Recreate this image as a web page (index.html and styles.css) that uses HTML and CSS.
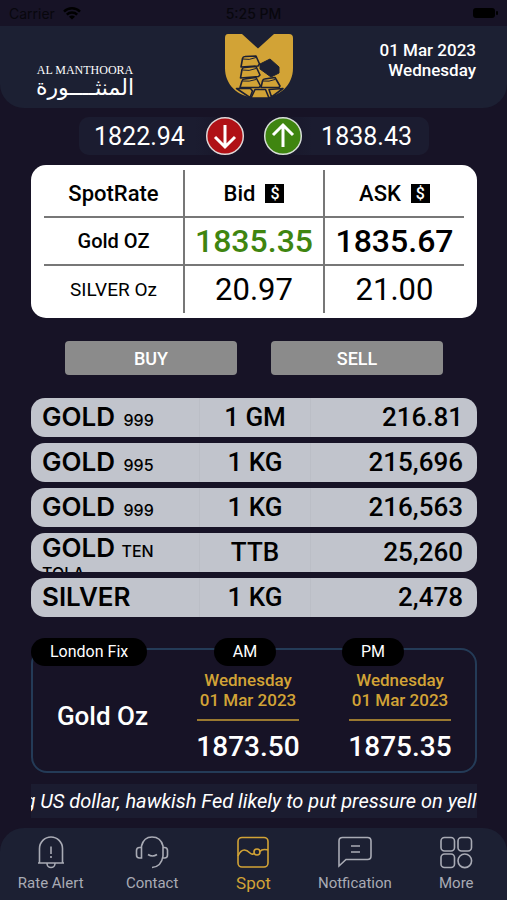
FILE: index.html
```
<!DOCTYPE html>
<html lang="en">
<head>
<meta charset="utf-8">
<meta name="viewport" content="width=device-width, initial-scale=1">
<title>Al Manthoora</title>
<link rel="stylesheet" href="styles.css">
</head>
<body>
<div class="status">
  <div class="carrier">Carrier
    <svg width="18" height="13" viewBox="0 0 18 13" fill="none" stroke="#000" stroke-width="2.4"><path d="M1 4.6a11.4 11.4 0 0 1 16 0M3.8 7.7a7.4 7.4 0 0 1 10.4 0"/><path d="M9 12.6L6 9.7a4.2 4.2 0 0 1 6 0z" fill="#000" stroke="none"/></svg>
  </div>
  <div class="clock">5:25 PM</div>
  <svg class="battery" width="26" height="12" viewBox="0 0 26 12"><rect x="1" y="1" width="22" height="10" rx="3"/><rect x="24" y="4" width="2" height="4" rx="1"/></svg>
</div>
<header class="header">
  <div class="brand">
    <div class="brand-en">AL MANTHOORA</div>
    <div class="brand-ar" lang="ar" dir="rtl">المنثــــورة</div>
  </div>
  <svg class="logo" width="70" height="66" viewBox="0 0 70 66">
    <path d="M4 1H18L34 15.500L50 1H65Q69 1 69 5V35C69 52 56 65 35 65S1 52 1 35V5Q1 1 4 1z" fill="#d2a336"/>
    <g fill="#d2a336" stroke="#1c2033" stroke-width="1.600" stroke-linejoin="round">
      <path d="M21 23.500L32 23L35.500 31L34 33L17 34L18.500 25.500Q19 23.500 21 23.500z"/>
      <path d="M20.500 34.500L32 33.500L36 42L34.500 43.500L16.500 45L18 36.500Q18.500 34.500 20.500 34.500z"/>
      <path d="M20.500 46L32 44.500L36.500 53L35 54.500H16L18 48Q18.500 46 20.500 46z"/>
      <path d="M40.500 46L51 44.500L56 53L55 54.500H37L38.500 48Q39 46 40.500 46z"/>
      <path d="M31 56.500H41.500L45 65H27z"/>
      <path d="M12.500 55.500H26.500L28.500 58L26 64.500z"/>
      <path d="M45 56.500L59 55.500L47.500 64z"/>
    </g>
    <path d="M36 31L46 26L55 34V40L47 44L36 36z" fill="#1c2033" stroke="#1c2033" stroke-linejoin="round"/>
    <path d="M19 26Q25 27.500 32 24.500M18.500 37Q25 38.500 32 35.500M18.500 48Q25 49 32 46.500M39 48Q45 49 51 46.500" stroke="#1c2033" stroke-width="1" fill="none"/>
  </svg>
  <div class="today">01 Mar 2023<br>Wednesday</div>
</header>
<main class="main">
  <section class="range">
    <div class="range-pill low"><span>1822.94</span>
      <svg width="40" height="40" viewBox="0 0 40 40"><circle cx="20" cy="20" r="18.300" fill="#b01116" stroke="#ddd6d6" stroke-width="1.500"/><path d="M20 9V31M10 21L20 31L30 21" fill="none" stroke="#fff" stroke-width="3"/></svg>
    </div>
    <div class="range-pill high">
      <svg width="40" height="40" viewBox="0 0 40 40"><circle cx="20" cy="20" r="18.300" fill="#3f8510" stroke="#d6ddd6" stroke-width="1.500"/><path d="M20 31V9M10 19L20 9L30 19" fill="none" stroke="#fff" stroke-width="3"/></svg>
      <span>1838.43</span></div>
  </section>
  <section class="spot">
    <table>
      <thead><tr><th>SpotRate</th>
        <th><span class="head">Bid <span class="dollar">$</span></span></th>
        <th><span class="head">ASK <span class="dollar">$</span></span></th></tr></thead>
      <tbody>
        <tr class="gold"><th>Gold OZ</th><td class="up">1835.35</td><td>1835.67</td></tr>
        <tr class="silver"><th>SILVER Oz</th><td>20.97</td><td>21.00</td></tr>
      </tbody>
    </table>
  </section>
  <section class="actions"><button type="button">BUY</button><button type="button">SELL</button></section>
  <table class="products">
    <tbody>
    <tr><td><div class="item">GOLD <small>999</small></div></td><td>1 GM</td><td>216.81</td></tr>
    <tr><td><div class="item">GOLD <small>995</small></div></td><td>1 KG</td><td>215,696</td></tr>
    <tr><td><div class="item">GOLD <small>999</small></div></td><td>1 KG</td><td>216,563</td></tr>
    <tr><td><div class="item wrapped">GOLD <small>TEN TOLA</small></div></td><td>TTB</td><td>25,260</td></tr>
    <tr><td><div class="item">SILVER</div></td><td>1 KG</td><td>2,478</td></tr>
    </tbody>
  </table>
  <section class="fix">
    <div class="fix-name"><h2 class="tag">London Fix</h2><strong>Gold Oz</strong></div>
    <div class="fix-col am"><h3 class="tag">AM</h3><p>Wednesday<br>01 Mar 2023</p><b>1873.50</b></div>
    <div class="fix-col pm"><h3 class="tag">PM</h3><p>Wednesday<br>01 Mar 2023</p><b>1875.35</b></div>
  </section>
  <div class="ticker"><span>g US dollar, hawkish Fed likely to put pressure on yello</span></div>
</main>
<nav class="nav">
  <a href="#alert"><svg width="36" height="36" viewBox="0 0 36 36"><path d="M6.500 29V14.500a11.500 11.500 0 0 1 23 0V29zM14 29.500a4 4 0 0 0 8 0M18 12.500V20M18 22V24M5 29H31"/></svg>Rate Alert</a>
  <a href="#contact"><svg width="36" height="36" viewBox="0 0 36 36"><path d="M7.500 13V12C9 6 13 3 18 3s9.500 3 11 9v10c-1 7-5 11-11 11.500M7 13.500H5.500a3 3 0 0 0-3 3V21a3 3 0 0 0 3 3H7.500V13.500zM29 13.500h1.500a3 3 0 0 1 3 3V21a3 3 0 0 1-3 3H29M14 20.500q4.500 3 9 0"/></svg>Contact</a>
  <a class="active" href="#spot"><svg width="36" height="36" viewBox="0 0 36 36"><rect x="3" y="3.500" width="30" height="29.500" rx="4"/><path d="M3 22C7 13 12 16 15 19c2 2 4 1 4.500 0M25 17.500c2-3 5-2 8-1.500"/><circle cx="22" cy="18" r="3"/></svg>Spot</a>
  <a href="#notification"><svg width="36" height="36" viewBox="0 0 36 36"><path d="M2 32V7q0-3.500 3.500-3.500H30.500Q34 3.500 34 7V22q0 3.500-3.500 3.500H9zM14 12H23M14 18H23"/></svg>Notfication</a>
  <a href="#more"><svg width="36" height="36" viewBox="0 0 36 36"><rect x="3" y="3.500" width="13.500" height="13.500" rx="3.500"/><rect x="20" y="3.500" width="13.500" height="13.500" rx="3.500"/><rect x="3" y="20" width="13.500" height="13.500" rx="3.500"/><circle cx="26.800" cy="26.800" r="6.800"/></svg>More</a>
</nav>
</body>
</html>
```
FILE: styles.css
```
* { box-sizing: border-box; }
body {
  margin: 0;
  min-height: 100vh;
  display: flex;
  flex-direction: column;
  background: #171326;
  color: #fff;
  font-family: Roboto, "Liberation Sans", sans-serif;
}
table { border-collapse: collapse; width: 100%; table-layout: fixed; }
th, td { padding: 0; }
h2, h3, p { margin: 0; }

.status {
  height: 26px;
  padding: 0 9px;
  display: grid;
  grid-template-columns: 1fr auto 1fr;
  align-items: center;
  color: #08070d;
  font: 500 14px Inter, sans-serif;
}
.carrier { display: flex; align-items: center; gap: 8px; font-weight: 400; }
.battery { justify-self: end; }

.header {
  height: 82px;
  padding: 0 31px 0 36px;
  display: grid;
  grid-template-columns: 1fr auto 182px;
  background: #1c2033;
  border-radius: 0 0 24px 24px;
}
.brand { width: 98px; padding-top: 37px; text-align: center; white-space: nowrap; }
.brand-en { font: 12px/14px "Liberation Serif", serif; }
.brand-ar { font: 22px/22px "DejaVu Sans", sans-serif; }
.logo { margin-top: 7px; }
.today { padding-top: 14px; text-align: right; font-size: 17px; line-height: 20px; font-weight: 500; }

.main { flex: 1; padding: 9px 30px 9px 31px; }
.range { display: flex; justify-content: center; gap: 18px; }
.range-pill {
  width: 166px;
  height: 38px;
  display: flex;
  align-items: center;
  justify-content: space-between;
  border-radius: 10px;
  background: linear-gradient(to right, #1b1c30 70%, #171326);
  font-size: 25px;
}
.low { padding-left: 15px; }
.high { padding-right: 17px; background: linear-gradient(to left, #1b1c30 70%, #171326); }

.spot {
  margin-top: 10px;
  padding: 5px 13px;
  border-radius: 15px;
  background: #fff;
  color: #000;
}
.spot tr { height: 48px; }
.spot thead tr { height: 47px; }
.spot th, .spot td { text-align: center; }
.spot tr > * + * { border-left: 2px solid #777; }
.spot tbody tr > * { border-top: 2px solid #777; }
.spot th { font-size: 22px; font-weight: 500; }
.head { display: flex; align-items: center; justify-content: center; gap: 10px; }
.dollar {
  width: 19px;
  height: 19px;
  background: #000;
  color: #fff;
  font-size: 16px;
  line-height: 19px;
}
.spot .gold th { font-size: 20px; }
.spot .silver th { font-size: 19px; font-weight: 400; }
.spot td { font-size: 31px; line-height: 36px; }
.spot .gold td { font-size: 32px; font-weight: 500; }
.spot .up { color: #3f8510; }

.actions { margin: 23px 34px 0; display: flex; gap: 34px; }
.actions button {
  flex: 1;
  height: 34px;
  border: 0;
  border-radius: 4px;
  background: #8b8b8b;
  color: #fff;
  font: 500 18px Roboto, sans-serif;
}

.products {
  margin-top: 17px;
  border-collapse: separate;
  border-spacing: 0 6px;
  color: #000;
  font-size: 26px;
  font-weight: 500;
}
.products td { height: 39px; background: #c1c4cc; text-align: center; line-height: 39px; }
.products td + td { border-left: 1px solid #bbbec6; }
.products td:first-child { width: 168px; border-radius: 14px 0 0 14px; text-align: left; }
.products td:nth-child(2) { width: 111px; }
.products td:last-child { border-radius: 0 14px 14px 0; padding-right: 14px; text-align: right; }
.item {
  height: 39px;
  padding-left: 11px;
  overflow: hidden;
  font: 600 26px/38px Inter, sans-serif;
}
.item small { margin-left: 2px; font-size: 16px; font-weight: 500; line-height: 16px; }
.wrapped { padding: 4px 40px 0 11px; line-height: 22px; }
.wrapped small { margin-left: 0; }

.fix {
  margin-top: 25px;
  height: 125px;
  display: grid;
  grid-template-columns: 139px 152px 152px;
  border: 2px solid #243b57;
  border-radius: 16px;
}
.tag {
  margin-top: -12px;
  padding: 0 19px;
  border-radius: 14px;
  background: #000;
  font-size: 16px;
  font-weight: 400;
  line-height: 28px;
}
.fix-name, .fix-col { display: flex; flex-direction: column; align-items: center; }
.fix-name .tag { align-self: flex-start; margin-left: -2px; }
.fix-name strong { margin-top: 35px; font-size: 26px; font-weight: 500; }
.am .tag { margin-right: 6px; }
.pm .tag { margin-right: 54px; }
.fix-col p {
  width: 102px;
  margin-top: 4px;
  padding-bottom: 9px;
  border-bottom: 2px solid #9a7930;
  color: #d2a336;
  font-size: 17px;
  font-weight: 500;
  line-height: 20px;
  text-align: center;
  white-space: nowrap;
}
.fix-col b { margin-top: 9px; font-size: 28px; line-height: 34px; font-weight: 500; }

.ticker {
  margin-top: 11px;
  padding-left: 4px;
  height: 34px;
  display: flex;
  justify-content: center;
  overflow: hidden;
  background: #1b1c30;
  font-size: 20px;
  line-height: 34px;
  font-style: italic;
  white-space: nowrap;
}

.nav {
  height: 72px;
  display: grid;
  grid-template-columns: repeat(5, 1fr);
  background: #1c2033;
  border-radius: 24px 24px 0 0;
}
.nav a {
  padding-top: 6px;
  display: flex;
  flex-direction: column;
  align-items: center;
  color: #a9abb5;
  font-size: 15px;
  line-height: 26px;
  text-decoration: none;
}
.nav svg { fill: none; stroke: currentColor; stroke-width: 1.6; }
.nav .active { color: #d2a336; font-size: 17px; }
```
